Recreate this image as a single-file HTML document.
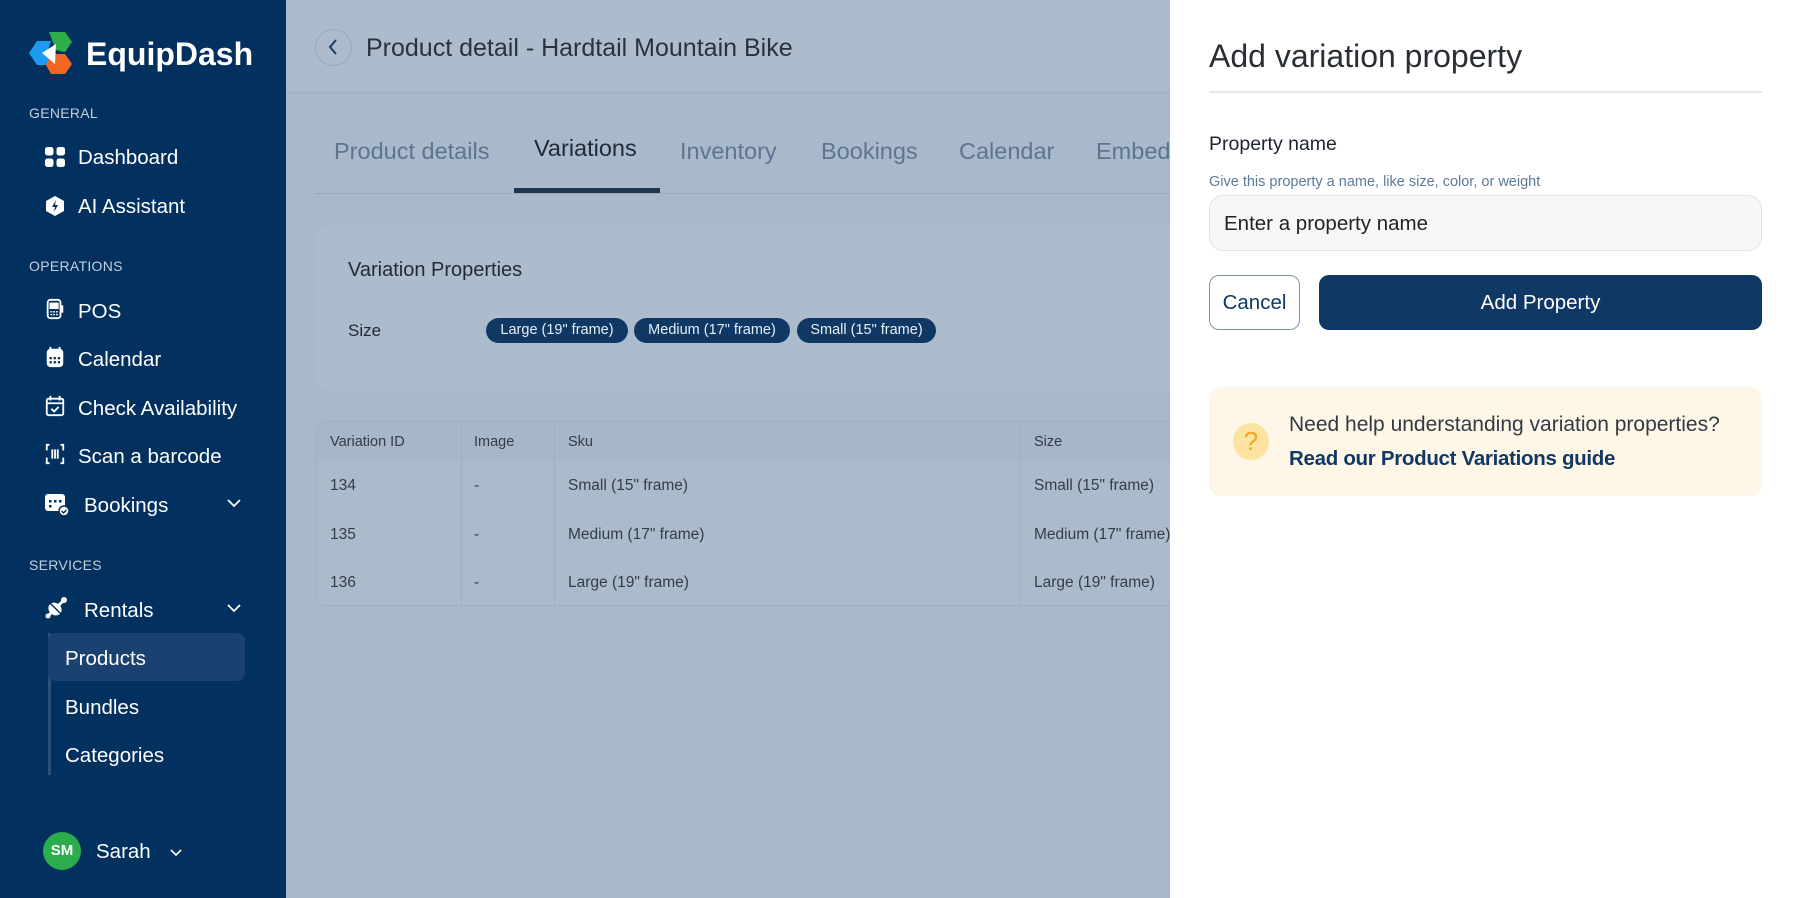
<!DOCTYPE html>
<html><head><meta charset="utf-8"><style>
*{margin:0;padding:0;box-sizing:border-box}
body{width:1800px;height:898px;overflow:hidden;position:relative;font-family:"Liberation Sans",sans-serif;background:#a9b8ca}
.a{position:absolute;white-space:nowrap}
#sb{position:absolute;left:0;top:0;width:286px;height:898px;background:#02305f}
.sec{font-size:14px;color:#c4cfdc;left:29px;height:20px;line-height:20px;letter-spacing:.3px}
.nav{font-size:20.5px;color:#fff;left:78px;height:28px;line-height:28px}
.ic{position:absolute;left:44px;width:22px;height:22px}
.tab{font-size:23.5px;color:#5d7590;top:136px;height:30px;line-height:30px}
.chip{position:absolute;top:318px;height:25px;line-height:25px;border-radius:13px;background:#0f3864;color:#e8eef5;font-size:14.5px;text-align:center}
.td{font-size:15.5px;color:#333d48;height:22px;line-height:22px}
</style></head><body>
<div id="sb">
 <svg class="a" style="left:29px;top:32px" width="43" height="42" viewBox="0 0 43 42">
  <polygon points="20,0 36,0 43,10 36,20 27,18" fill="#2fad4b"/>
  <polygon points="0,21 8,9 22,9 18,21 22,33 8,33" fill="#1d9bf0"/>
  <polygon points="22,22 36,22 43,32 36,42 22,42 17,33" fill="#f26522"/>
  <polygon points="13,21 27,12 26,32" fill="#fff"/>
 </svg>
 <div class="a" style="left:86px;top:34px;font-size:32px;font-weight:bold;color:#fff;line-height:40px">EquipDash</div>
 <div class="a sec" style="top:103px">GENERAL</div>
 <svg class="ic" style="top:146px" viewBox="0 0 22 22" fill="#fff"><rect x="1" y="1" width="8.5" height="8.5" rx="2.5"/><rect x="12.5" y="1" width="8.5" height="8.5" rx="2.5"/><rect x="1" y="12.5" width="8.5" height="8.5" rx="2.5"/><rect x="12.5" y="12.5" width="8.5" height="8.5" rx="2.5"/></svg>
 <div class="a nav" style="top:144px">Dashboard</div>
 <svg class="ic" style="top:195px" viewBox="0 0 22 22"><polygon points="11,1 20,6 20,16 11,21 2,16 2,6" fill="#fff"/><path d="M12 5 L8 12 H11 L10 17 L14 10 H11 Z" fill="#02305f"/></svg>
 <div class="a nav" style="top:193px">AI Assistant</div>
 <div class="a sec" style="top:256px">OPERATIONS</div>
 <svg class="ic" style="top:298px" viewBox="0 0 22 24" fill="none" stroke="#fff" stroke-width="2"><rect x="3" y="2" width="14" height="20" rx="3"/><rect x="6" y="6" width="8" height="5" fill="#fff"/><path d="M17 9h2v6h-2"/><path d="M6 15h2M9 15h2M12 15h2M6 18h2M9 18h2M12 18h2" stroke-width="1.5"/></svg>
 <div class="a nav" style="top:298px">POS</div>
 <svg class="ic" style="top:346px" viewBox="0 0 22 24"><rect x="2" y="3" width="18" height="20" rx="4" fill="#fff"/><path d="M6 1v5M16 1v5" stroke="#fff" stroke-width="2"/><g fill="#02305f"><rect x="5" y="12" width="2.5" height="2.5"/><rect x="9.5" y="12" width="2.5" height="2.5"/><rect x="14" y="12" width="2.5" height="2.5"/><rect x="5" y="16.5" width="2.5" height="2.5"/><rect x="9.5" y="16.5" width="2.5" height="2.5"/><rect x="14" y="16.5" width="2.5" height="2.5"/></g></svg>
 <div class="a nav" style="top:346px">Calendar</div>
 <svg class="ic" style="top:395px" viewBox="0 0 22 24" fill="none" stroke="#fff" stroke-width="2"><rect x="2" y="4" width="18" height="18" rx="2"/><path d="M2 9h18M6 1v5M16 1v5M7 15l3 3 5-5"/></svg>
 <div class="a nav" style="top:395px">Check Availability</div>
 <svg class="ic" style="top:443px" viewBox="0 0 22 24" fill="none" stroke="#fff" stroke-width="2"><path d="M5 2H2v6M17 2h3v6M5 22H2v-6M17 22h3v-6M8 7v10M11 7v10M14 7v10"/></svg>
 <div class="a nav" style="top:443px">Scan a barcode</div>
 <svg class="ic" style="top:491px;width:26px;height:26px" viewBox="0 0 26 26"><rect x="1" y="3" width="20" height="17" rx="3" fill="#fff"/><g fill="#02305f"><rect x="5" y="9" width="2.5" height="2.5"/><rect x="10" y="9" width="2.5" height="2.5"/><rect x="15" y="9" width="2.5" height="2.5"/><rect x="5" y="14" width="2.5" height="2.5"/></g><circle cx="20" cy="20" r="5" fill="#fff" stroke="#02305f" stroke-width="1.5"/><path d="M17.5 20l2 2 3-3" stroke="#02305f" stroke-width="1.5" fill="none"/></svg>
 <div class="a nav" style="top:492px;left:84px">Bookings</div>
 <svg class="a" style="left:226px;top:498px" width="16" height="10" viewBox="0 0 16 10" fill="none" stroke="#fff" stroke-width="1.8"><path d="M2 2l6 6 6-6"/></svg>
 <div class="a sec" style="top:555px">SERVICES</div>
 <svg class="ic" style="top:596px;width:24px;height:24px" viewBox="0 0 24 24"><ellipse cx="11" cy="13" rx="7" ry="6" fill="#fff" transform="rotate(40 11 13)"/><path d="M3 21L20 4" stroke="#fff" stroke-width="3"/><circle cx="20" cy="4" r="3" fill="#fff"/><circle cx="4" cy="20" r="2.5" fill="#fff"/><path d="M5 6l13 13" stroke="#02305f" stroke-width="1.5"/></svg>
 <div class="a nav" style="top:597px;left:84px">Rentals</div>
 <svg class="a" style="left:226px;top:603px" width="16" height="10" viewBox="0 0 16 10" fill="none" stroke="#fff" stroke-width="1.8"><path d="M2 2l6 6 6-6"/></svg>
 <div class="a" style="left:48px;top:633px;width:3px;height:142px;background:#2d5078"></div>
 <div class="a" style="left:48px;top:633px;width:197px;height:48px;border-radius:8px;background:#1a4170"></div>
 <div class="a nav" style="top:645px;left:65px">Products</div>
 <div class="a nav" style="top:694px;left:65px">Bundles</div>
 <div class="a nav" style="top:742px;left:65px">Categories</div>
 <div class="a" style="left:43px;top:832px;width:38px;height:38px;border-radius:50%;background:#2bad4e;color:#fff;font-weight:bold;font-size:15px;line-height:38px;text-align:center">SM</div>
 <div class="a nav" style="top:838px;left:96px">Sarah</div>
 <svg class="a" style="left:169px;top:848px" width="14" height="9" viewBox="0 0 14 9" fill="none" stroke="#fff" stroke-width="1.8"><path d="M2 2l5 5 5-5"/></svg>
</div>

<!-- main -->
<div class="a" style="left:286px;top:0;width:884px;height:93px;background:#acbccd;border-bottom:1px solid #9fb0c2"></div>
<div class="a" style="left:315px;top:29px;width:37px;height:37px;border-radius:50%;border:1px solid #98aabe"></div>
<svg class="a" style="left:326px;top:38px" width="14" height="18" viewBox="0 0 14 18" fill="none" stroke="#1a3c63" stroke-width="2"><path d="M10 2L4 9l6 7"/></svg>
<div class="a" style="left:366px;top:32px;font-size:25px;color:#2a323c;line-height:32px">Product detail - Hardtail Mountain Bike</div>
<div class="a tab" style="left:334px">Product details</div>
<div class="a tab" style="left:534px;top:133px;color:#1f2b38">Variations</div>
<div class="a tab" style="left:680px">Inventory</div>
<div class="a tab" style="left:821px">Bookings</div>
<div class="a tab" style="left:959px">Calendar</div>
<div class="a tab" style="left:1096px">Embed</div>
<div class="a" style="left:315px;top:193px;width:855px;height:1px;background:#98a9bc"></div>
<div class="a" style="left:514px;top:188px;width:146px;height:5px;background:#1f3550"></div>
<div class="a" style="left:315px;top:224px;width:880px;height:167px;border-radius:16px;background:#adbccd"></div>
<div class="a" style="left:348px;top:257px;font-size:20px;color:#222b35;line-height:26px">Variation Properties</div>
<div class="a" style="left:348px;top:320px;font-size:17px;color:#222b35;line-height:22px">Size</div>
<div class="chip" style="left:486px;width:142px">Large (19" frame)</div>
<div class="chip" style="left:634px;width:156px">Medium (17" frame)</div>
<div class="chip" style="left:797px;width:139px">Small (15" frame)</div>
<div class="a" style="left:316px;top:421px;width:880px;height:185px;border:1px solid #9fb0c2;border-radius:10px;background:#acbbcc;overflow:hidden">
 <div class="a" style="left:0;top:0;width:880px;height:39px;background:#a7b6c8"></div>
 <div class="a" style="left:144px;top:0;width:1px;height:185px;background:#9fb0c2"></div>
 <div class="a" style="left:237px;top:0;width:1px;height:185px;background:#9fb0c2"></div>
 <div class="a" style="left:703px;top:0;width:1px;height:185px;background:#9fb0c2"></div>
</div>
<div class="a td" style="left:330px;top:431px;font-size:14.5px">Variation ID</div>
<div class="a td" style="left:474px;top:431px;font-size:14.5px">Image</div>
<div class="a td" style="left:568px;top:431px;font-size:14.5px">Sku</div>
<div class="a td" style="left:1034px;top:431px;font-size:14.5px">Size</div>
<div class="a td" style="left:330px;top:475px">134</div><div class="a td" style="left:474px;top:475px">-</div><div class="a td" style="left:568px;top:475px">Small (15" frame)</div><div class="a td" style="left:1034px;top:475px">Small (15" frame)</div>
<div class="a td" style="left:330px;top:524px">135</div><div class="a td" style="left:474px;top:524px">-</div><div class="a td" style="left:568px;top:524px">Medium (17" frame)</div><div class="a td" style="left:1034px;top:524px">Medium (17" frame)</div>
<div class="a td" style="left:330px;top:572px">136</div><div class="a td" style="left:474px;top:572px">-</div><div class="a td" style="left:568px;top:572px">Large (19" frame)</div><div class="a td" style="left:1034px;top:572px">Large (19" frame)</div>

<!-- panel -->
<div class="a" style="left:1170px;top:0;width:630px;height:898px;background:#fff"></div>
<div class="a" style="left:1209px;top:36px;font-size:32px;color:#2a2f35;line-height:40px">Add variation property</div>
<div class="a" style="left:1209px;top:91px;width:553px;height:2px;background:#e4e8ec"></div>
<div class="a" style="left:1209px;top:131px;font-size:19.5px;color:#1f2530;line-height:26px">Property name</div>
<div class="a" style="left:1209px;top:172px;font-size:14.5px;color:#5b7a98;line-height:20px">Give this property a name, like size, color, or weight</div>
<div class="a" style="left:1209px;top:195px;width:553px;height:56px;border:1px solid #dfe4e8;border-radius:14px;background:#f6f8f8"></div>
<div class="a" style="left:1224px;top:211px;font-size:20.5px;color:#222;line-height:26px">Enter a property name</div>
<div class="a" style="left:1209px;top:275px;width:91px;height:55px;border:1.5px solid #7d93ad;border-radius:10px;text-align:center;line-height:53px;font-size:20.5px;color:#0f3864">Cancel</div>
<div class="a" style="left:1319px;top:275px;width:443px;height:55px;border-radius:10px;background:#0f3864;text-align:center;line-height:56px;font-size:20.5px;color:#fff">Add Property</div>
<div class="a" style="left:1209px;top:387px;width:553px;height:109px;border-radius:12px;background:#fef7e8"></div>
<div class="a" style="left:1233px;top:423px;width:36px;height:37px;border-radius:50%;background:#fde3a0;color:#f1a522;font-size:26px;line-height:37px;text-align:center">?</div>
<div class="a" style="left:1289px;top:412px;font-size:21px;color:#333a44;line-height:26px">Need help understanding variation properties?</div>
<div class="a" style="left:1289px;top:446px;font-size:20.5px;color:#0f3864;line-height:26px;font-weight:bold;letter-spacing:-0.3px">Read our Product Variations guide</div>
</body></html>
